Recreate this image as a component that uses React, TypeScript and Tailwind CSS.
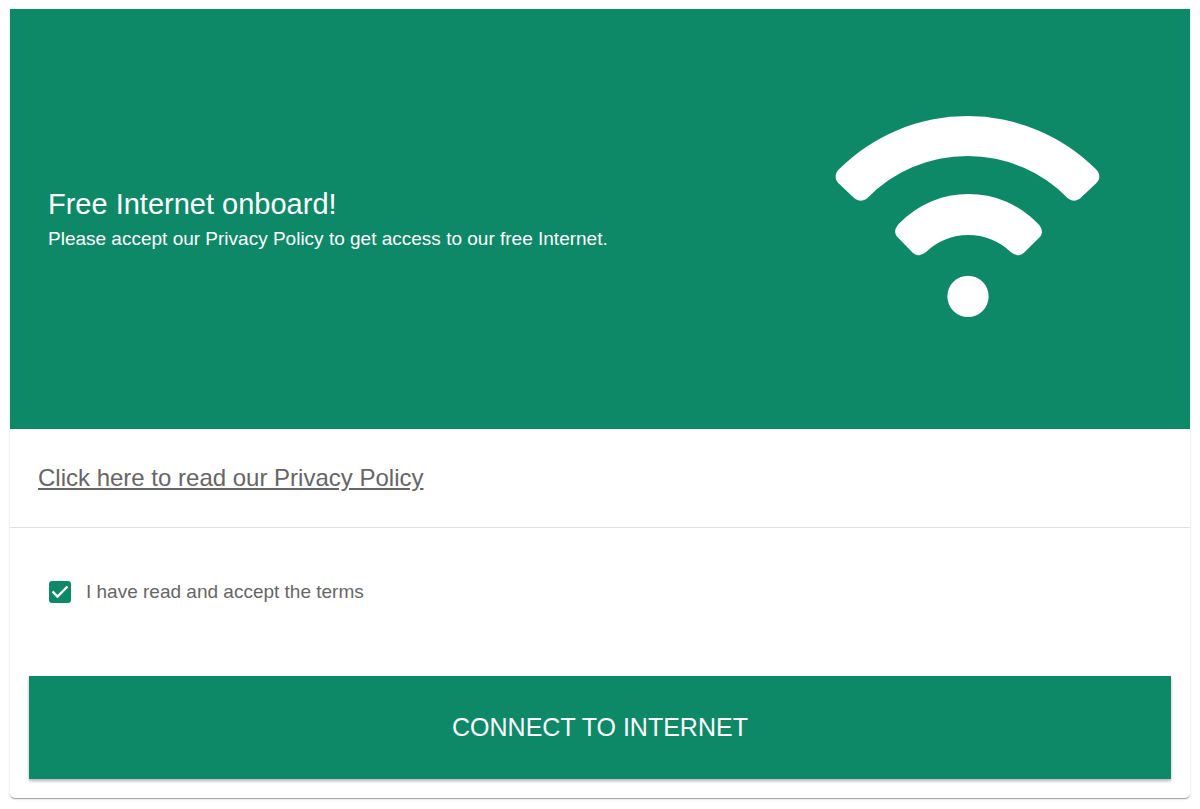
import { useState } from "react";

function WifiIcon() {
  return (
    <svg
      viewBox="0 -3 900 720"
      className="w-[300px] shrink-0"
      fill="currentColor"
      aria-hidden="true"
    >
      <path d="M57 208 A545 545 0 0 1 828 208 C841 221 841 236 830 248 L781 295 Q764 309 745 296 A421.5 421.5 0 0 0 140 296 Q120 309 103 295 L54 248 C44 236 44 221 57 208 Z" />
      <path d="M239 369 A288 288 0 0 1 652 369 C669 386 669 400 659 412 L611 459 Q593 473 573 457 A184 184 0 0 0 317 457 Q297 473 279 459 L233 412 C222 400 222 386 239 369 Z" />
      <circle cx="444" cy="589" r="62" />
    </svg>
  );
}

export default function App() {
  const [accepted, setAccepted] = useState(true);

  return (
    <div className="bg-white px-[10px] pt-[9px] pb-[10px] font-['Liberation_Sans',Arial,sans-serif]">
      <main className="rounded-[5px] bg-white shadow-[0_2px_1px_-1px_rgba(0,0,0,0.2),0_1px_1px_0_rgba(0,0,0,0.14),0_1px_3px_0_rgba(0,0,0,0.12)]">
        <header className="flex items-center justify-between bg-[#0d8967] py-[90px] pr-[70px] pl-[38px] text-white">
          <div>
            <h1 className="mb-[2px] text-[29px] leading-[38px]">
              Free Internet onboard!
            </h1>
            <p className="text-[19px] leading-7">
              Please accept our Privacy Policy to get access to our free
              Internet.
            </p>
          </div>
          <WifiIcon />
        </header>

        <div className="border-b border-[#e0e0e0] px-7 py-[33px]">
          <a
            href="#privacy"
            className="block w-fit text-2xl leading-8 text-[#666666] underline"
          >
            Click here to read our Privacy Policy
          </a>
        </div>

        <div className="px-[19px] pt-[50px] pb-[19px]">
          <label className="ml-5 flex h-7 w-fit items-center gap-[15px] text-[19px] text-[#666666]">
            <span className="relative flex">
              <input
                type="checkbox"
                checked={accepted}
                onChange={(e) => setAccepted(e.target.checked)}
                className="peer size-[22px] appearance-none rounded-[3px] border-2 border-[#666666] checked:border-[#0d8967] checked:bg-[#0d8967]"
              />
              <svg
                viewBox="0 0 22 22"
                className="pointer-events-none absolute inset-0 hidden text-white peer-checked:block"
                fill="none"
                stroke="currentColor"
                strokeWidth="2.4"
                aria-hidden="true"
              >
                <path d="M3.5 10.5 L8.5 15.5 L18.5 5.5" />
              </svg>
            </span>
            I have read and accept the terms
          </label>

          <button
            type="button"
            disabled={!accepted}
            className="mt-[70px] block w-full bg-[#0d8967] py-9 text-[25px] leading-[31px] text-white uppercase shadow-[0_2px_3px_rgba(0,0,0,0.3)]"
          >
            Connect to Internet
          </button>
        </div>
      </main>
    </div>
  );
}
